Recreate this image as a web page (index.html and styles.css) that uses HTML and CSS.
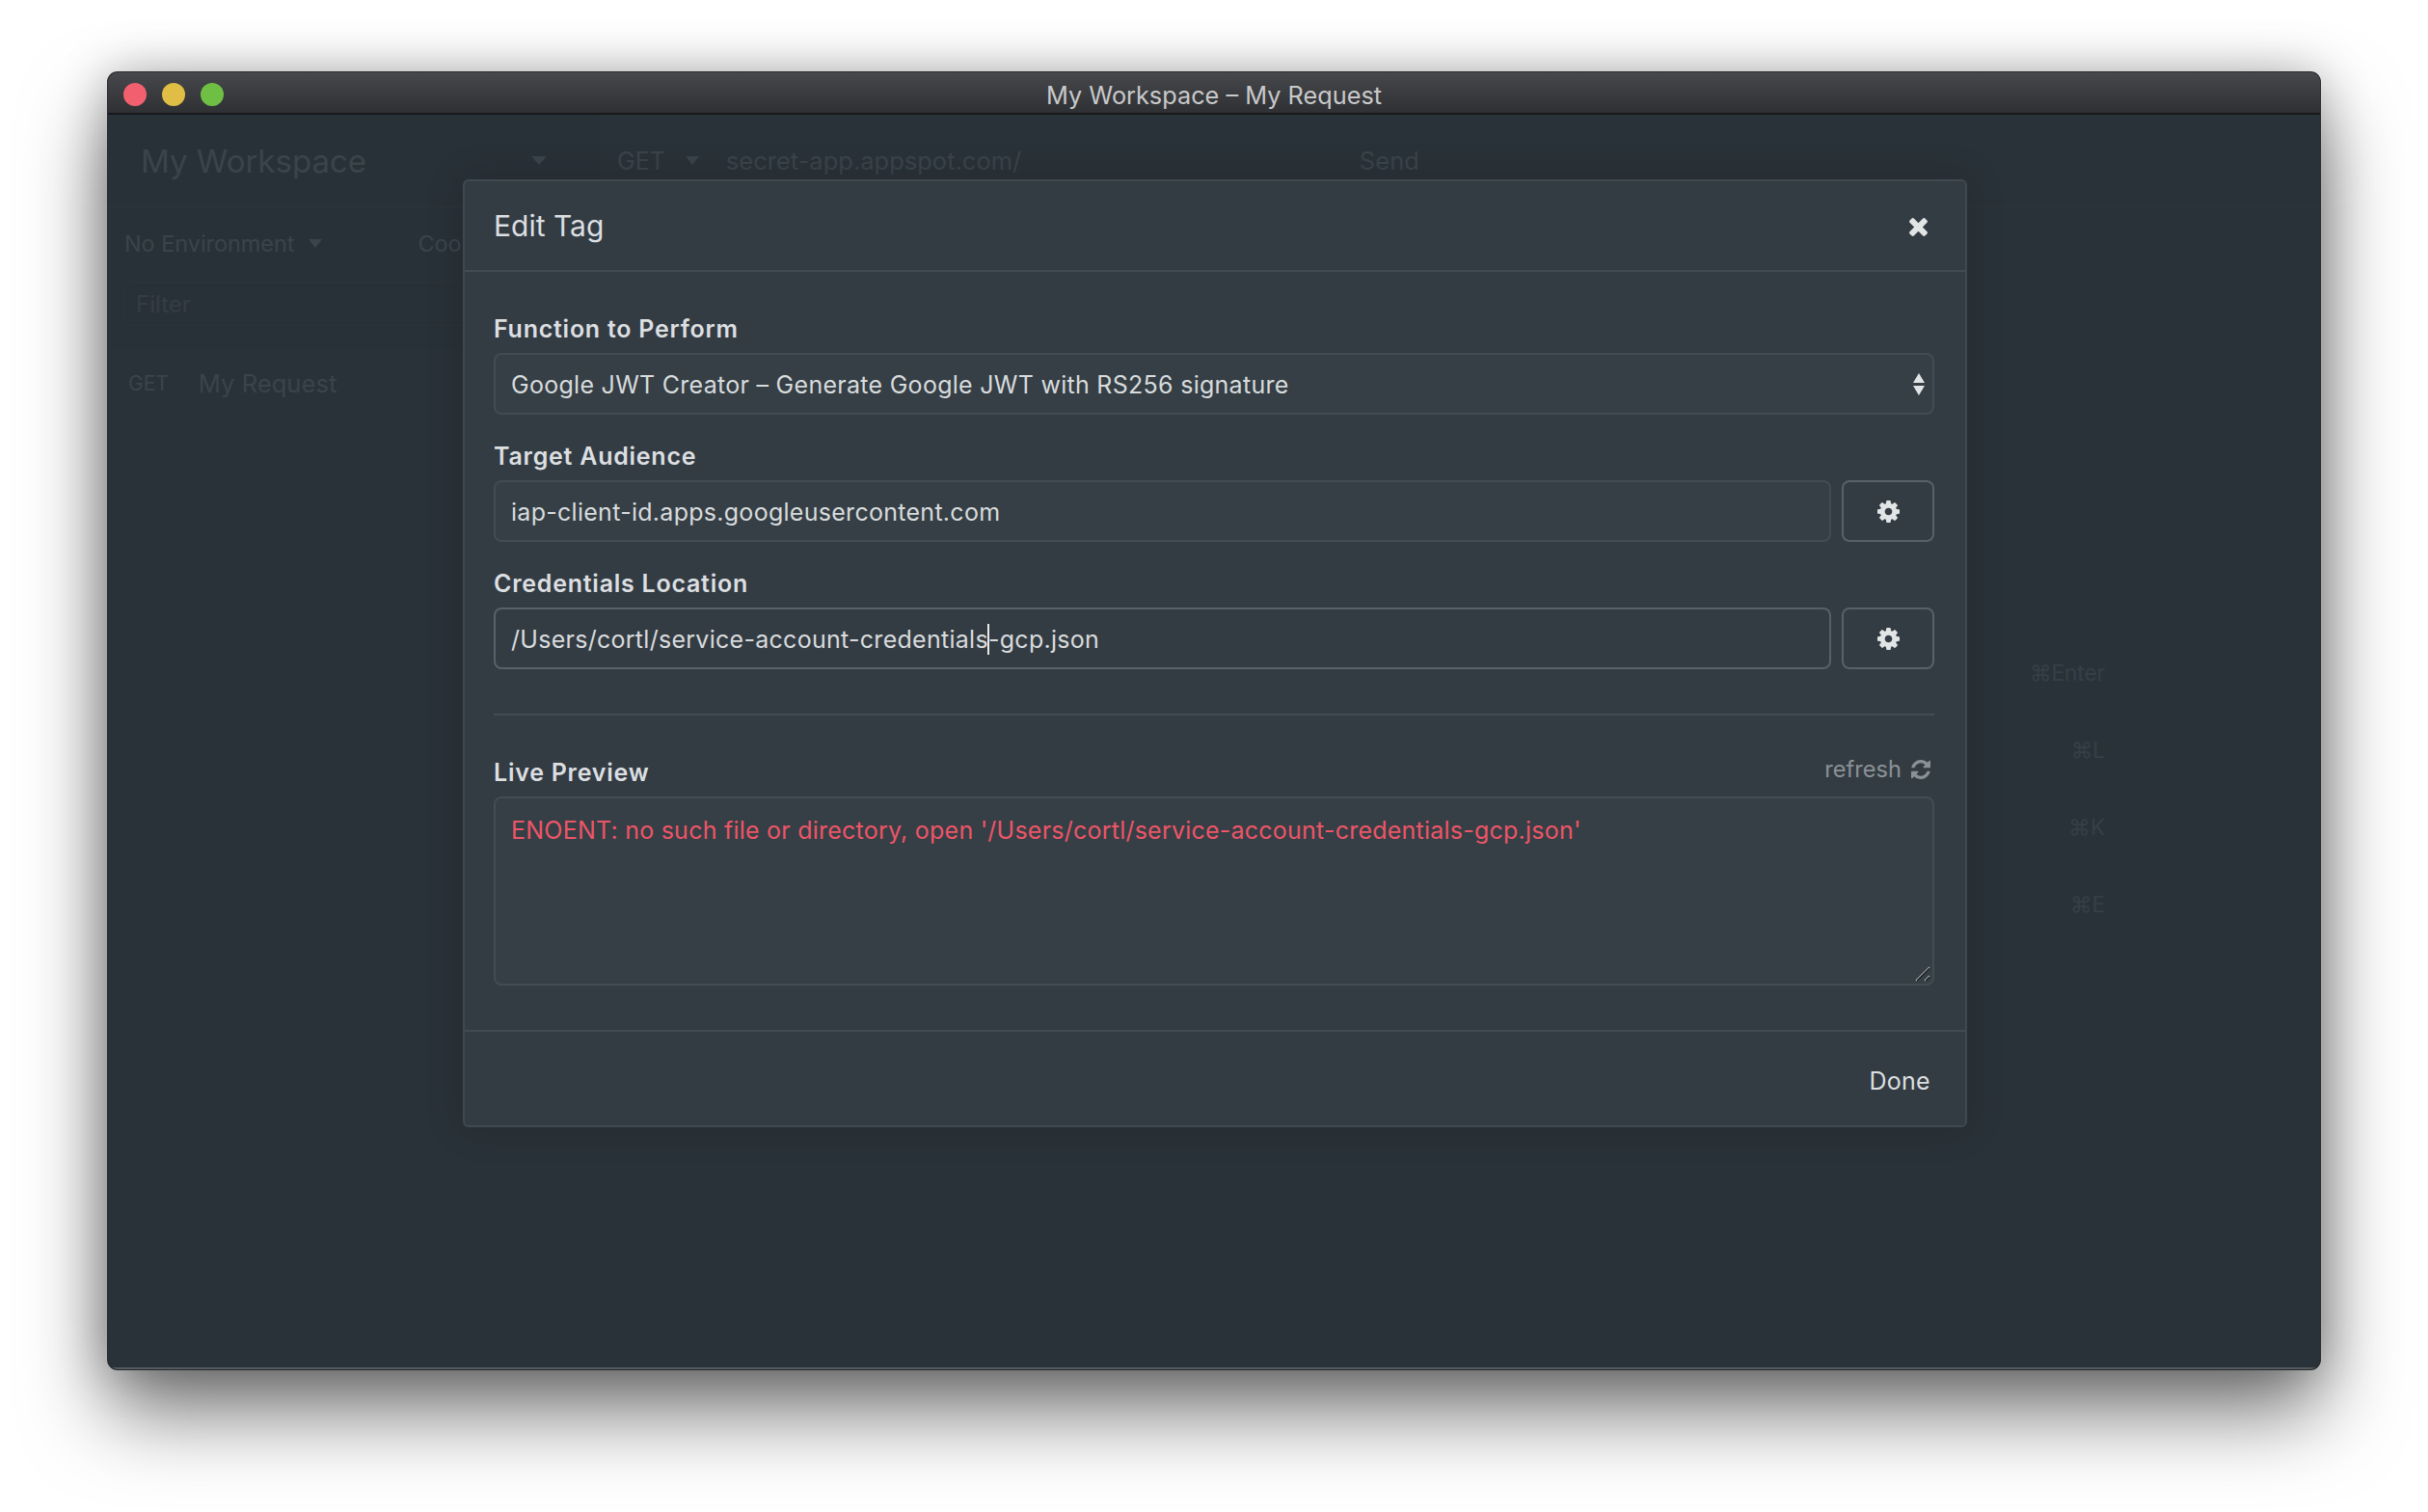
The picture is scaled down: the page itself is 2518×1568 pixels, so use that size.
FILE: index.html
```html
<!DOCTYPE html>
<html lang="en">
<head>
<meta charset="utf-8">
<title>My Workspace – My Request</title>
<link rel="stylesheet" href="styles.css">
</head>
<body>
<svg class="defs" width="0" height="0" aria-hidden="true">
  <symbol id="cog" viewBox="0 128 1536 1536"><path d="M1024 896q0-106-75-181t-181-75-181 75-75 181 75 181 181 75 181-75 75-181zm512-109v222q0 12-8 23t-20 13l-185 28q-19 54-39 91 35 50 107 138 10 12 10 25t-9 23q-27 37-99 108t-94 71q-12 0-26-9l-138-108q-44 23-91 38-16 136-29 186-7 28-36 28h-222q-14 0-24.500-8.500t-11.500-21.500l-28-184q-49-16-90-37l-141 107q-10 9-25 9-14 0-25-11-126-114-165-168-7-10-7-23 0-12 8-23 15-21 51-66.500t54-70.500q-27-50-41-99l-183-27q-13-2-21-12.500t-8-23.500v-222q0-12 8-23t19-13l186-28q14-46 39-92-40-57-107-138-10-12-10-24 0-10 9-23 26-36 98.500-107.500t94.500-71.500q13 0 26 10l138 107q44-23 91-38 16-136 29-186 7-28 36-28h222q14 0 24.500 8.500t11.500 21.500l28 184q49 16 90 37l142-107q9-9 24-9 13 0 25 10 129 119 165 170 7 8 7 22 0 12-8 23-15 21-51 66.500t-54 70.500q26 50 41 98l183 28q13 2 21 12.500t8 23.500z"/></symbol>
</svg>
<div class="window">
  <div class="titlebar">
    <div class="lights"><span class="light red"></span><span class="light yellow"></span><span class="light green"></span></div>
    <div class="title">My Workspace – My Request</div>
  </div>
  <div class="app">
    <div class="sidebar">
      <div class="ws-row"><span class="ws-name">My Workspace</span><span class="caret"></span></div>
      <div class="env-row"><span class="env">No Environment</span><span class="caret small"></span><span class="cookies">Cookies</span></div>
      <div class="filter-row"><span>Filter</span></div>
      <div class="req-row"><span class="req-method">GET</span><span class="req-name">My Request</span></div>
    </div>
    <div class="main">
      <div class="url-row"><span class="method">GET</span><span class="caret small wide"></span><span class="url">secret-app.appspot.com/</span><span class="send">Send</span></div>
      <div class="hotkeys">
        <div>⌘Enter</div><div>⌘L</div><div>⌘K</div><div>⌘E</div>
      </div>
    </div>
    <div class="modal">
      <div class="modal-head">
        <span class="modal-title">Edit Tag</span>
        <svg class="close" viewBox="110 238 1188 1316"><path d="M1298 1322q0 40-28 68l-136 136q-28 28-68 28t-68-28l-294-294-294 294q-28 28-68 28t-68-28l-136-136q-28-28-28-68t28-68l294-294-294-294q-28-28-28-68t28-68l136-136q28-28 68-28t68 28l294 294 294-294q28-28 68-28t68 28l136 136q28 28 28 68t-28 68l-294 294 294 294q28 28 28 68z"/></svg>
      </div>
      <div class="modal-body">
        <div class="label">Function to Perform</div>
        <div class="field select">
          <span>Google JWT Creator – Generate Google JWT with RS256 signature</span>
          <span class="updown"><i class="up"></i><i class="down"></i></span>
        </div>
        <div class="label">Target Audience</div>
        <div class="input-row">
          <div class="field grow">iap-client-id.apps.googleusercontent.com</div>
          <div class="gear-btn"><svg class="gear"><use href="#cog"/></svg></div>
        </div>
        <div class="label">Credentials Location</div>
        <div class="input-row">
          <div class="field grow focused"><span>/Users/cortl/service-account-credentials</span><span class="cursor"></span><span>-gcp.json</span></div>
          <div class="gear-btn"><svg class="gear"><use href="#cog"/></svg></div>
        </div>
        <hr class="rule">
        <div class="preview-head">
          <span class="label flush">Live Preview</span>
          <span class="refresh">refresh <svg class="refresh-icon" viewBox="0 128 1536 1536"><path d="M1511 1056q0 5-1 7-64 268-268 434.500t-478 166.500q-146 0-282.500-55t-243.500-157l-129 129q-19 19-45 19t-45-19-19-45v-448q0-26 19-45t45-19h448q26 0 45 19t19 45-19 45l-137 137q71 66 161 102t187 36q134 0 250-65t186-179q11-17 53-117 8-23 30-23h192q13 0 22.500 9.500t9.500 22.500zm25-800v448q0 26-19 45t-45 19h-448q-26 0-45-19t-19-45 19-45l138-138q-148-137-349-137-134 0-250 65t-186 179q-11 17-53 117-8 23-30 23h-199q-13 0-22.500-9.500t-9.500-22.500v-7q65-268 270-434.500t480-166.500q146 0 284 55.500t245 156.500l130-129q19-19 45-19t45 19 19 45z"/></svg></span>
        </div>
        <div class="preview">
          <span>ENOENT: no such file or directory, open '/Users/cortl/service-account-credentials-gcp.json'</span>
          <svg class="grip" viewBox="0 0 16 16"><path class="grip-light" d="M1 15 15 1M10 15l5-5"/><path class="grip-dark" d="M2 15 15 2M11 15l4-4"/></svg>
        </div>
      </div>
      <div class="modal-foot"><span class="done">Done</span></div>
    </div>
  </div>
</div>
</body>
</html>
```
FILE: styles.css
```css
* { box-sizing: border-box; }
html, body { margin: 0; height: 100%; }
body {
  background: #fff;
  padding: 75px 112px 0 112px;
  font-family: Inter, "Liberation Sans", sans-serif;
  overflow: hidden;
}
.defs { position: absolute; }
.window {
  height: 1345px;
  border-radius: 10px;
  background: #2a3239;
  display: flex;
  flex-direction: column;
  overflow: hidden;
  box-shadow: 0 0 0 1px #26282a, 0 44px 85px rgba(0,0,0,.55), 0 0 50px rgba(0,0,0,.25);
}
.titlebar {
  height: 44px;
  flex: none;
  position: relative;
  display: flex;
  align-items: center;
  justify-content: center;
  padding-top: 4px;
  background: linear-gradient(#47484c, #2f3034);
  border-bottom: 2px solid #16181a;
}
.lights { position: absolute; left: 16px; top: 11px; display: flex; gap: 16px; }
.light { width: 24px; height: 24px; border-radius: 50%; }
.red { background: #f2606f; }
.yellow { background: #e0bd45; }
.green { background: #70bf45; }
.title { font-size: 25.3px; color: #c8c9ca; }
.app { flex: 1; display: flex; position: relative; color: #3a444b; box-shadow: inset 0 -2px 0 #555a5e; }
.sidebar { width: 510px; flex: none; display: flex; flex-direction: column; background: linear-gradient(#293138 244px, transparent 244px); margin-bottom: 2px; }
.ws-row { height: 96px; flex: none; padding: 0 55px 0 34px; display: flex; align-items: center; justify-content: space-between; border-bottom: 1px solid #2d353b; }
.ws-name { font-size: 33px; }
.caret { flex: none; width: 0; height: 0; border-left: 8.5px solid transparent; border-right: 8.5px solid transparent; border-top: 9px solid currentColor; }
.caret.small { border-left-width: 7.5px; border-right-width: 7.5px; border-top-width: 9px; margin-left: 15px; }
.caret.wide { margin-left: 21px; }
.env-row { height: 74px; flex: none; padding-left: 17px; display: flex; align-items: center; font-size: 23.4px; }
.cookies { margin-left: 99px; }
.filter-row { height: 46px; flex: none; margin: 3px 16px 0; padding-left: 12px; display: flex; align-items: center; font-size: 24px; color: #343d44; border: 1px solid #2c343a; border-radius: 6px; }
.req-row { height: 70px; flex: none; margin-top: 24px; padding-left: 21px; display: flex; align-items: center; font-size: 25.6px; }
.req-method { font-size: 21px; margin-right: 31px; }
.main { flex: 1; display: flex; flex-direction: column; }
.url-row { height: 96px; flex: none; padding-left: 18px; display: flex; align-items: center; font-size: 25px; border-bottom: 1px solid #2d353b; }
.url { margin-left: 28px; width: 657px; font-size: 25.5px; }
.send { font-size: 25.6px; }
.hotkeys { margin-top: 443px; padding-right: 223px; display: flex; flex-direction: column; align-items: flex-end; font-size: 22.5px; color: #363f46; }
.hotkeys div { height: 80px; line-height: 80px; }
.modal {
  position: absolute;
  left: 368px;
  top: 67px;
  width: 1560px;
  height: 983px;
  background: #343c43;
  border: 2px solid #3f4a50;
  border-radius: 6px;
  display: flex;
  flex-direction: column;
  color: #dcdfe1;
  box-shadow: 0 0 40px rgba(0,0,0,.16);
}
.modal-head {
  height: 94px;
  flex: none;
  padding: 0 38px 0 30px;
  display: flex;
  align-items: center;
  justify-content: space-between;
  border-bottom: 2px solid #414c52;
}
.modal-title { font-size: 30px; }
.close { width: 21px; height: 21px; fill: #e2e5e6; }
.modal-body { flex: 1; padding: 16px 32px 0 30px; display: flex; flex-direction: column; }
.label { font-size: 25px; font-weight: 600; letter-spacing: .75px; height: 68px; padding-top: 28px; line-height: 30px; color: #dcdfe1; }
.field {
  height: 64px;
  border: 2px solid #414d53;
  border-radius: 8px;
  background: #353f45;
  padding: 1px 16px 0;
  display: flex;
  align-items: center;
  font-size: 25px;
  letter-spacing: .28px;
  color: #d8dbdd;
}
.select { justify-content: space-between; padding-right: 8px; }
.updown { display: flex; flex-direction: column; gap: 3px; }
.updown i { width: 0; height: 0; border-left: 6px solid transparent; border-right: 6px solid transparent; }
.up { border-bottom: 10px solid #e2e5e6; }
.down { border-top: 10px solid #e2e5e6; }
.input-row { display: flex; gap: 11px; }
.grow { flex: 1; min-width: 0; }
.focused { background: #343c43; border-color: #566268; }
.cursor { width: 2px; height: 32px; background: #e6e9ea; margin-left: -1px; margin-right: -1px; }
.gear-btn { width: 96px; height: 64px; flex: none; border: 2px solid #566268; border-radius: 8px; display: flex; align-items: center; justify-content: center; }
.gear { width: 23px; height: 23px; fill: #e2e5e6; }
.rule { border: 0; border-top: 2px solid #414c52; margin: 46px 0 0; }
.preview-head { height: 84px; flex: none; display: flex; align-items: flex-end; justify-content: space-between; padding-bottom: 10px; }
.label.flush { height: 30px; padding: 0; }
.refresh { display: flex; align-items: center; gap: 10px; font-size: 23.6px; line-height: 28px; color: #8b9296; padding-right: 4px; padding-bottom: 4px; }
.refresh-icon { width: 20px; height: 20px; fill: #8b9296; }
.preview {
  height: 196px;
  flex: none;
  position: relative;
  border: 2px solid #414d53;
  border-radius: 8px;
  background: #353f45;
  padding: 18px 16px;
  font-size: 25px;
  letter-spacing: .23px;
  line-height: 30px;
  color: #ed5568;
}
.grip { position: absolute; right: 2px; bottom: 2px; width: 16px; height: 16px; fill: none; stroke-width: 1.2; }
.grip-light { stroke: #d5d8da; }
.grip-dark { stroke: #15181a; }
.modal-foot {
  height: 99px;
  flex: none;
  border-top: 2px solid #414c52;
  padding: 4px 36px 0;
  display: flex;
  align-items: center;
  justify-content: flex-end;
}
.done { font-size: 25px; letter-spacing: .3px; color: #dcdfe1; }
```
